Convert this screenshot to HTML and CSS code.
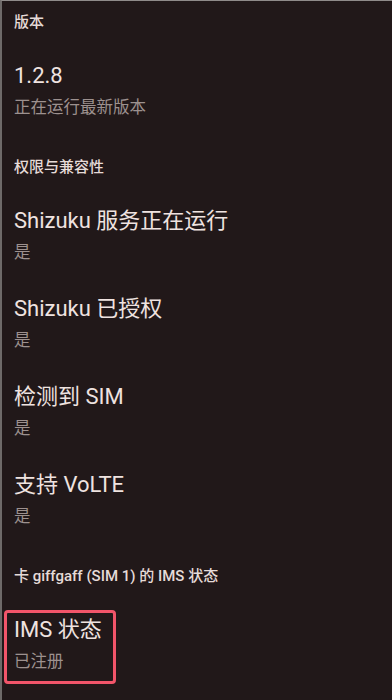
FILE: index.html
```html
<!DOCTYPE html>
<html>
<head>
  <meta name="viewport" content="width=device-width, initial-scale=1.0">
  <link rel="stylesheet" href="styles.css">
</head>
<body>
  <div class="screen">
    <div class="section-title first">版本</div>
    <div class="pref">
      <div class="pref-title">1.2.8</div>
      <div class="pref-summary">正在运行最新版本</div>
    </div>

    <div class="section-title">权限与兼容性</div>
    <div class="pref">
      <div class="pref-title">Shizuku 服务正在运行</div>
      <div class="pref-summary">是</div>
    </div>
    <div class="pref">
      <div class="pref-title">Shizuku 已授权</div>
      <div class="pref-summary">是</div>
    </div>
    <div class="pref">
      <div class="pref-title">检测到 SIM</div>
      <div class="pref-summary">是</div>
    </div>
    <div class="pref">
      <div class="pref-title">支持 VoLTE</div>
      <div class="pref-summary">是</div>
    </div>

    <div class="section-title">卡 giffgaff (SIM 1) 的 IMS 状态</div>
    <div class="pref marked">
      <div class="pref-title">IMS 状态</div>
      <div class="pref-summary">已注册</div>
      <div class="highlight"></div>
    </div>
  </div>
</body>
</html>
```

FILE: styles.css
```css
* {
  box-sizing: border-box;
  margin: 0;
  padding: 0;
}

html, body {
  background-color: #211819;
}

body {
  font-family: Roboto, "Noto Sans CJK SC", sans-serif;
}

.screen {
  min-height: 700px;
  border-top: 1px solid #8f8b8a;
  border-left: 2px solid #6e6a69;
  background-color: #211819;
}

.section-title {
  padding: 23px 14px 14px 12px;
  font-size: 15px;
  font-weight: 500;
  line-height: 20px;
  color: #e6dbd8;
}

.section-title.first {
  padding-top: 11px;
}

.pref {
  position: relative;
  padding: 12px 14px 12px 12px;
}

.pref-title {
  font-size: 22px;
  line-height: 36px;
  color: #efe3e0;
}

.pref-summary {
  font-size: 16.5px;
  line-height: 28px;
  color: #9d918f;
}

/* annotation box drawn over the last row */
.highlight {
  position: absolute;
  left: 2px;
  top: 10px;
  width: 112px;
  height: 74px;
  border: 3px solid #f2556a;
  border-radius: 4px;
}
```
